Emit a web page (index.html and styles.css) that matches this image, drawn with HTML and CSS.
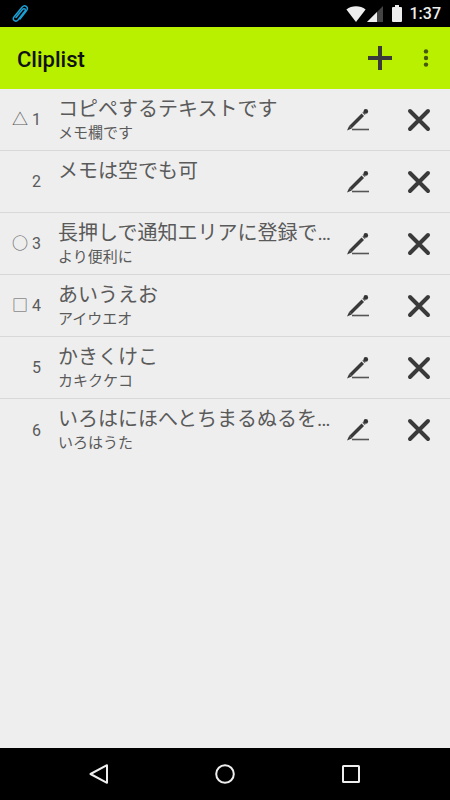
FILE: index.html
```html
<!DOCTYPE html>
<html lang="ja">
<head>
  <meta charset="UTF-8">
  <meta name="viewport" content="width=device-width, initial-scale=1.0">
  <title>Cliplist</title>
  <link rel="stylesheet" href="styles.css">
</head>
<body>
  <!-- shared row icons -->
  <svg class="sprite" aria-hidden="true">
    <symbol id="icon-edit" viewBox="0 0 24 24">
      <path d="M4.5 19 16.8 6.7" stroke="#3a3a3a" stroke-width="3.4"/>
      <path d="M3.2 17.8 5.8 20.4 1 22.4Z" fill="#3a3a3a"/>
      <circle cx="19.8" cy="3.4" r="2.3" fill="#333"/>
      <path d="M16.8 4.2 19.2 6.6" stroke="#555" stroke-width="1.4"/>
      <path d="M6 21.5H23" stroke="#555" stroke-width="1.6"/>
    </symbol>
    <symbol id="icon-delete" viewBox="0 0 24 24">
      <path d="M3 3 21 21M21 3 3 21" stroke="#3a3a3a" stroke-width="4" stroke-linecap="round"/>
    </symbol>
  </svg>

  <div class="status-bar">
    <svg class="clip" viewBox="0 0 18 20" width="18" height="20">
      <path d="M5 13.5 11.5 5.5C13 3.8 15.2 5.2 14 7L7 16C5 18.3 1 16.5 2.8 13.2L11.2 3C13.8 .2 17.8 3 15.8 6.2L9 15" fill="none" stroke="#1b9fd4" stroke-width="1.5" stroke-linecap="round"/>
    </svg>
    <div class="status-icons">
      <svg viewBox="0 0 20 16" width="20" height="16">
        <path d="M10 16 .4 3.6C5.6-.8 14.4-.8 19.6 3.6Z" fill="#eee"/>
      </svg>
      <svg class="signal" viewBox="0 0 16 16" width="16" height="16">
        <path d="M0 16 16 0V16Z" fill="#444"/>
        <path d="M0 16 10 6V16Z" fill="#eee"/>
      </svg>
      <svg class="battery" viewBox="0 0 10 17" width="10" height="17">
        <path d="M3 0H7V2H9Q10 2 10 3V16Q10 17 9 17H1Q0 17 0 16V3Q0 2 1 2H3Z" fill="#eee"/>
      </svg>
      <span class="clock">1:37</span>
    </div>
  </div>

  <header class="app-bar">
    <h1>Cliplist</h1>
    <button class="add" aria-label="追加">
      <svg viewBox="0 0 24 24" width="24" height="24"><path d="M12 0V24M0 12H24" stroke="#3a3a3a" stroke-width="4"/></svg>
    </button>
    <button class="menu" aria-label="メニュー">
      <svg viewBox="0 0 6 18" width="6" height="18">
        <g fill="#46580c"><circle cx="3" cy="2.4" r="2.2"/><circle cx="3" cy="9" r="2.2"/><circle cx="3" cy="15.6" r="2.2"/></g>
      </svg>
    </button>
  </header>

  <main>
    <ul class="clips">
      <li class="clip-row">
        <div class="number"><span class="mark">△</span><span>1</span></div>
        <div class="text"><p class="title">コピペするテキストです</p><p class="memo">メモ欄です</p></div>
        <button class="edit" aria-label="編集"><svg width="24" height="24"><use href="#icon-edit"/></svg></button>
        <button class="delete" aria-label="削除"><svg width="24" height="24"><use href="#icon-delete"/></svg></button>
      </li>
      <li class="clip-row">
        <div class="number"><span>2</span></div>
        <div class="text"><p class="title">メモは空でも可</p><p class="memo"></p></div>
        <button class="edit" aria-label="編集"><svg width="24" height="24"><use href="#icon-edit"/></svg></button>
        <button class="delete" aria-label="削除"><svg width="24" height="24"><use href="#icon-delete"/></svg></button>
      </li>
      <li class="clip-row">
        <div class="number"><span class="mark">○</span><span>3</span></div>
        <div class="text"><p class="title">長押しで通知エリアに登録で…</p><p class="memo">より便利に</p></div>
        <button class="edit" aria-label="編集"><svg width="24" height="24"><use href="#icon-edit"/></svg></button>
        <button class="delete" aria-label="削除"><svg width="24" height="24"><use href="#icon-delete"/></svg></button>
      </li>
      <li class="clip-row">
        <div class="number"><span class="mark">□</span><span>4</span></div>
        <div class="text"><p class="title">あいうえお</p><p class="memo">アイウエオ</p></div>
        <button class="edit" aria-label="編集"><svg width="24" height="24"><use href="#icon-edit"/></svg></button>
        <button class="delete" aria-label="削除"><svg width="24" height="24"><use href="#icon-delete"/></svg></button>
      </li>
      <li class="clip-row">
        <div class="number"><span>5</span></div>
        <div class="text"><p class="title">かきくけこ</p><p class="memo">カキクケコ</p></div>
        <button class="edit" aria-label="編集"><svg width="24" height="24"><use href="#icon-edit"/></svg></button>
        <button class="delete" aria-label="削除"><svg width="24" height="24"><use href="#icon-delete"/></svg></button>
      </li>
      <li class="clip-row">
        <div class="number"><span>6</span></div>
        <div class="text"><p class="title">いろはにほへとちまるぬるを…</p><p class="memo">いろはうた</p></div>
        <button class="edit" aria-label="編集"><svg width="24" height="24"><use href="#icon-edit"/></svg></button>
        <button class="delete" aria-label="削除"><svg width="24" height="24"><use href="#icon-delete"/></svg></button>
      </li>
    </ul>
  </main>

  <nav class="nav-bar">
    <button aria-label="戻る">
      <svg viewBox="0 0 20 20" width="20" height="20"><path d="M18 1.2V18.8L1.5 10Z"/></svg>
    </button>
    <button aria-label="ホーム">
      <svg viewBox="0 0 20 20" width="20" height="20"><circle cx="10" cy="10" r="8.8"/></svg>
    </button>
    <button aria-label="履歴">
      <svg viewBox="0 0 20 20" width="20" height="20"><rect x="2" y="2" width="16" height="16" rx=".5"/></svg>
    </button>
  </nav>
</body>
</html>
```
FILE: styles.css
```css
* {
  box-sizing: border-box;
}
body {
  margin: 0;
  min-height: 100vh;
  display: flex;
  flex-direction: column;
  background-color: #eee;
  color: #5a5a5a;
  font-family: Roboto, "Noto Sans CJK JP", sans-serif;
}
svg {
  display: block;
}
button {
  display: flex;
  align-items: center;
  justify-content: center;
  padding: 0;
  border: none;
  background: none;
  cursor: pointer;
}
.sprite {
  position: absolute;
  width: 0;
  height: 0;
}

/* status bar */
.status-bar {
  display: flex;
  align-items: center;
  justify-content: space-between;
  height: 27px;
  padding: 0 9px 0 11px;
  background-color: #000;
}
.status-icons {
  display: flex;
  align-items: center;
}
.signal {
  margin-left: 1px;
}
.battery {
  margin: 0 8px 0 9px;
}
.clock {
  color: #eee;
  font-size: 16px;
  font-weight: 500;
  line-height: 20px;
}

/* title bar */
.app-bar {
  display: flex;
  align-items: center;
  height: 62px;
  padding-left: 17px;
  background-color: #b8f000;
}
h1 {
  flex: 1;
  margin: 0;
  padding-top: 2px;
  color: #111;
  font-size: 22px;
  font-weight: 500;
}
.add {
  width: 44px;
  height: 44px;
}
.menu {
  width: 48px;
  height: 44px;
}

/* list */
main {
  flex: 1;
}
.clips {
  margin: 0;
  padding: 0;
  list-style: none;
}
.clip-row {
  display: flex;
  height: 62px;
  border-bottom: 1px solid #d8d8d8;
}
.clip-row:last-child {
  border-bottom: none;
}
.number {
  display: flex;
  align-items: center;
  justify-content: flex-end;
  gap: 4px;
  width: 58px;
  padding-right: 17px;
  font-size: 16px;
}
.mark {
  line-height: 20px;
}
.text {
  flex: 1;
  min-width: 0;
  padding-top: 7px;
}
.title,
.memo {
  margin: 0;
  white-space: nowrap;
}
.title {
  font-size: 20px;
  line-height: 26px;
}
.memo {
  font-size: 15px;
  line-height: 22px;
}
.edit {
  width: 60px;
}
.delete {
  width: 62px;
}

/* navigation bar */
.nav-bar {
  display: flex;
  justify-content: center;
  height: 52px;
  background-color: #000;
}
.nav-bar button {
  flex: 0 0 28%;
}
.nav-bar svg {
  fill: none;
  stroke: #eee;
  stroke-width: 2;
  stroke-linejoin: round;
}
```
